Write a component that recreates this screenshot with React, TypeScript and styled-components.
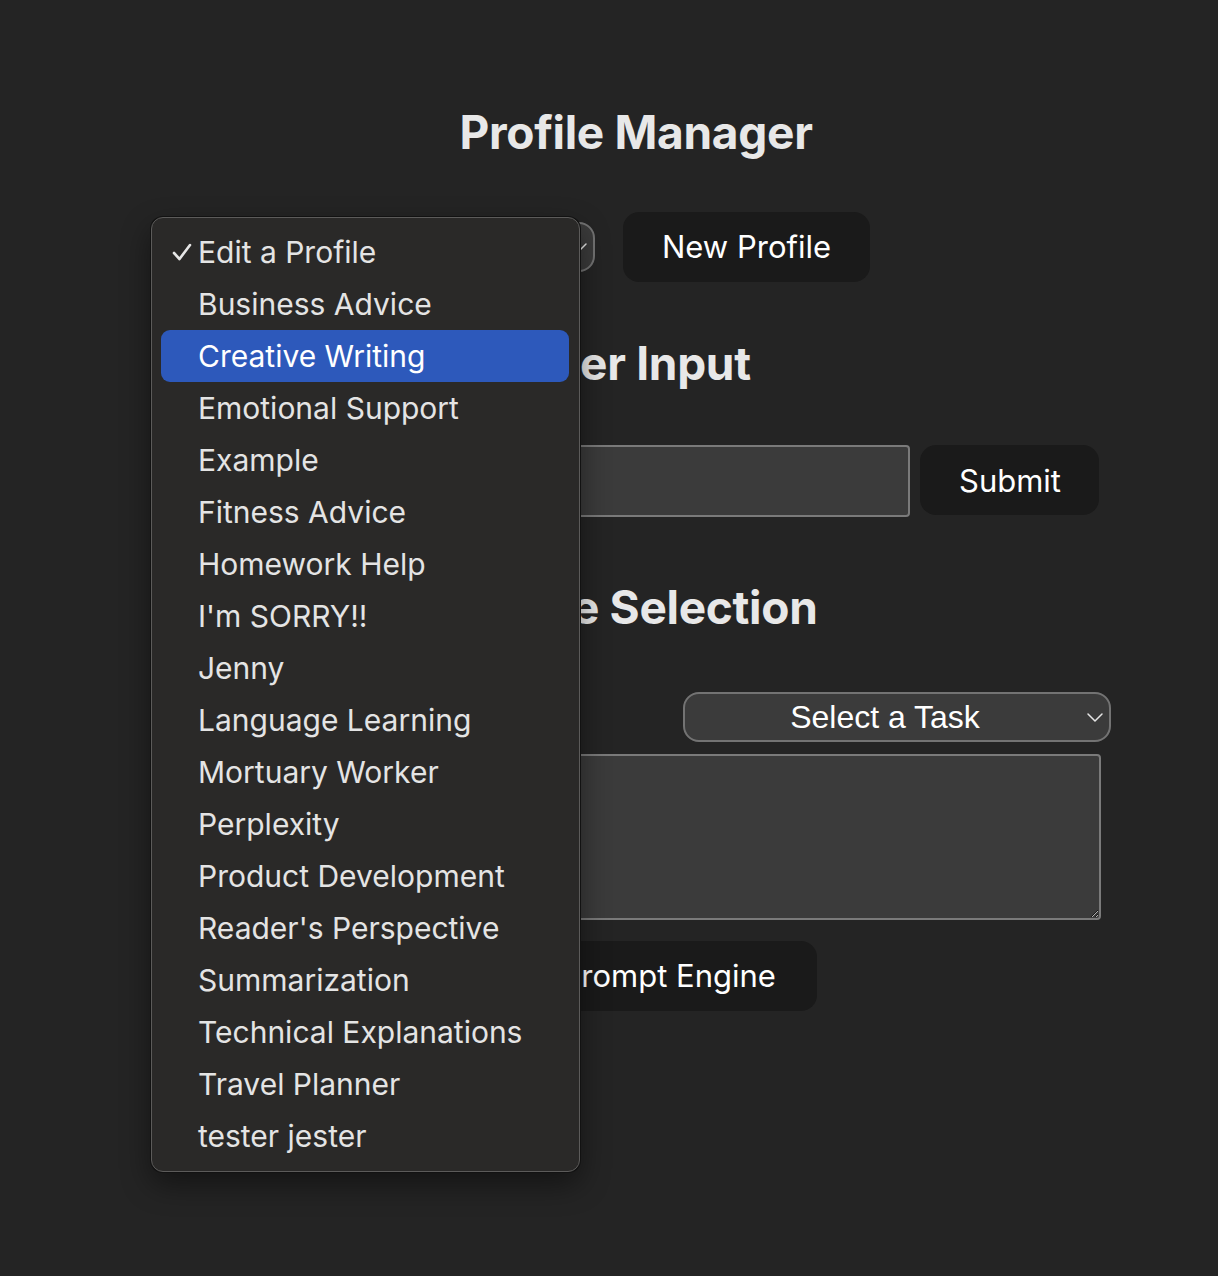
import React from 'react';
import styled, { createGlobalStyle } from 'styled-components';

const profiles = [
  'Edit a Profile',
  'Business Advice',
  'Creative Writing',
  'Emotional Support',
  'Example',
  'Fitness Advice',
  'Homework Help',
  "I'm SORRY!!",
  'Jenny',
  'Language Learning',
  'Mortuary Worker',
  'Perplexity',
  'Product Development',
  "Reader's Perspective",
  'Summarization',
  'Technical Explanations',
  'Travel Planner',
  'tester jester',
];

const GlobalStyle = createGlobalStyle`
  html, body {
    margin: 0;
    background: #242424;
  }
  body {
    color: rgba(255, 255, 255, 0.87);
    font-family: Inter, "Noto Sans", system-ui, sans-serif;
    min-height: 1276px;
  }
`;

const Chevron: React.FC<{ size?: number }> = ({ size = 20 }) => (
  <svg width={size} height={size} viewBox="0 0 20 20" fill="none">
    <polyline points="3,7 10,14 17,7" stroke="#e6e6e6" strokeWidth="1.5"
      strokeLinecap="round" strokeLinejoin="round" />
  </svg>
);

const Check: React.FC = () => (
  <svg width="22" height="22" viewBox="0 0 22 22" fill="none">
    <polyline points="3,12 8.5,18 19,4" stroke="#e6e6e6" strokeWidth="2.6"
      strokeLinecap="round" strokeLinejoin="round" />
  </svg>
);

const SelectBox: React.FC<{ label: string; width: number }> = ({ label, width }) => (
  <SelectWrap style={{ width }}>
    <NativeSelect defaultValue={label}>
      <option>{label}</option>
    </NativeSelect>
    <ChevronSlot><Chevron /></ChevronSlot>
  </SelectWrap>
);

const App: React.FC = () => {
  return (
    <Page>
      <GlobalStyle />
      <Title>Profile Manager</Title>

      <ProfileRow>
        <SelectBox label="Edit a Profile" width={193} />
        <Button>New Profile</Button>
      </ProfileRow>

      <Heading top={56}>User Input</Heading>
      <InputRow>
        <TextInput type="text" />
        <Button wide={179}>Submit</Button>
      </InputRow>

      <Heading top={65}>Profile Selection</Heading>
      <SelectRow>
        <SelectBox label="Select a Profile" width={410} />
        <SelectBox label="Select a Task" width={428} />
      </SelectRow>
      <Prompt />
      <RunButton>Run Prompt Engine</RunButton>

      <Menu>
        {profiles.map((name, i) => (
          <MenuItem key={name} active={i === 2}>
            <CheckSlot>{i === 0 && <Check />}</CheckSlot>
            {name}
          </MenuItem>
        ))}
      </Menu>
    </Page>
  );
};

const Page = styled.div`
  align-items: center;
  box-sizing: border-box;
  display: flex;
  flex-direction: column;
  min-height: 1276px;
  padding: 107px 0 0 54px;
  position: relative;
  width: 1218px;
`;

const Title = styled.h1`
  color: #e8e8e8;
  font-size: 46px;
  font-weight: 700;
  letter-spacing: -0.3px;
  line-height: 1.1;
  margin: 0;
`;

const Heading = styled.h2<{ top: number }>`
  color: #e8e8e8;
  font-size: 46px;
  font-weight: 700;
  letter-spacing: -0.3px;
  line-height: 1.1;
  margin: ${(p) => p.top}px 0 0;
`;

const ProfileRow = styled.div`
  align-items: center;
  display: flex;
  gap: 28px;
  margin-top: 54px;
`;

const InputRow = styled.div`
  align-items: flex-start;
  display: flex;
  gap: 10px;
  margin-top: 57px;
`;

const SelectRow = styled.div`
  display: flex;
  justify-content: space-between;
  margin-top: 59px;
  width: 950px;
`;

const Button = styled.button<{ wide?: number }>`
  background: #1a1a1a;
  border: 1px solid transparent;
  border-radius: 16px;
  box-sizing: border-box;
  color: #ffffff;
  font-family: Inter, "Noto Sans", sans-serif;
  font-size: 31px;
  height: 70px;
  line-height: 1;
  padding: 0 38px;
  white-space: nowrap;
  width: ${(p) => (p.wide ? `${p.wide}px` : 'auto')};
`;

const RunButton = styled(Button)`
  margin-top: 21px;
  padding: 0;
  width: 362px;
`;

const SelectWrap = styled.div`
  height: 50px;
  position: relative;
`;

const NativeSelect = styled.select`
  appearance: none;
  background: #3b3b3b;
  border: 2px solid #737373;
  border-radius: 16px;
  box-sizing: border-box;
  color: #ffffff;
  font-family: "Liberation Sans", Arial, sans-serif;
  font-size: 32px;
  height: 100%;
  padding: 0 34px 0 10px;
  text-align: center;
  text-align-last: center;
  width: 100%;
`;

const ChevronSlot = styled.span`
  display: flex;
  pointer-events: none;
  position: absolute;
  right: 6px;
  top: 15px;
`;

const TextInput = styled.input`
  background: #3b3b3b;
  border: 2px solid #7a7a7a;
  border-radius: 4px;
  box-sizing: border-box;
  height: 72px;
  width: 737px;
`;

const Prompt = styled.textarea`
  background: #3b3b3b;
  border: 2px solid #7a7a7a;
  border-radius: 4px;
  box-sizing: border-box;
  height: 166px;
  margin-top: 12px;
  width: 930px;
`;

const Menu = styled.div`
  background: #2a2928;
  border: 1px solid #5c5b5a;
  border-radius: 12px;
  box-shadow: 0 0 0 1px #121212, 0 12px 30px rgba(0, 0, 0, 0.45);
  box-sizing: border-box;
  display: flex;
  flex-direction: column;
  left: 151px;
  padding: 8px 10px 9px 9px;
  position: absolute;
  top: 217px;
  width: 429px;
`;

const MenuItem = styled.div<{ active?: boolean }>`
  align-items: center;
  background: ${(p) => (p.active ? '#2d59bb' : 'transparent')};
  border-radius: 9px;
  color: ${(p) => (p.active ? '#ffffff' : '#e4e4e4')};
  display: flex;
  font-family: Inter, "Noto Sans", sans-serif;
  font-size: 30px;
  height: 52px;
  white-space: nowrap;
`;

const CheckSlot = styled.span`
  display: flex;
  justify-content: center;
  padding-left: 5px;
  width: 32px;
`;

export default App;
